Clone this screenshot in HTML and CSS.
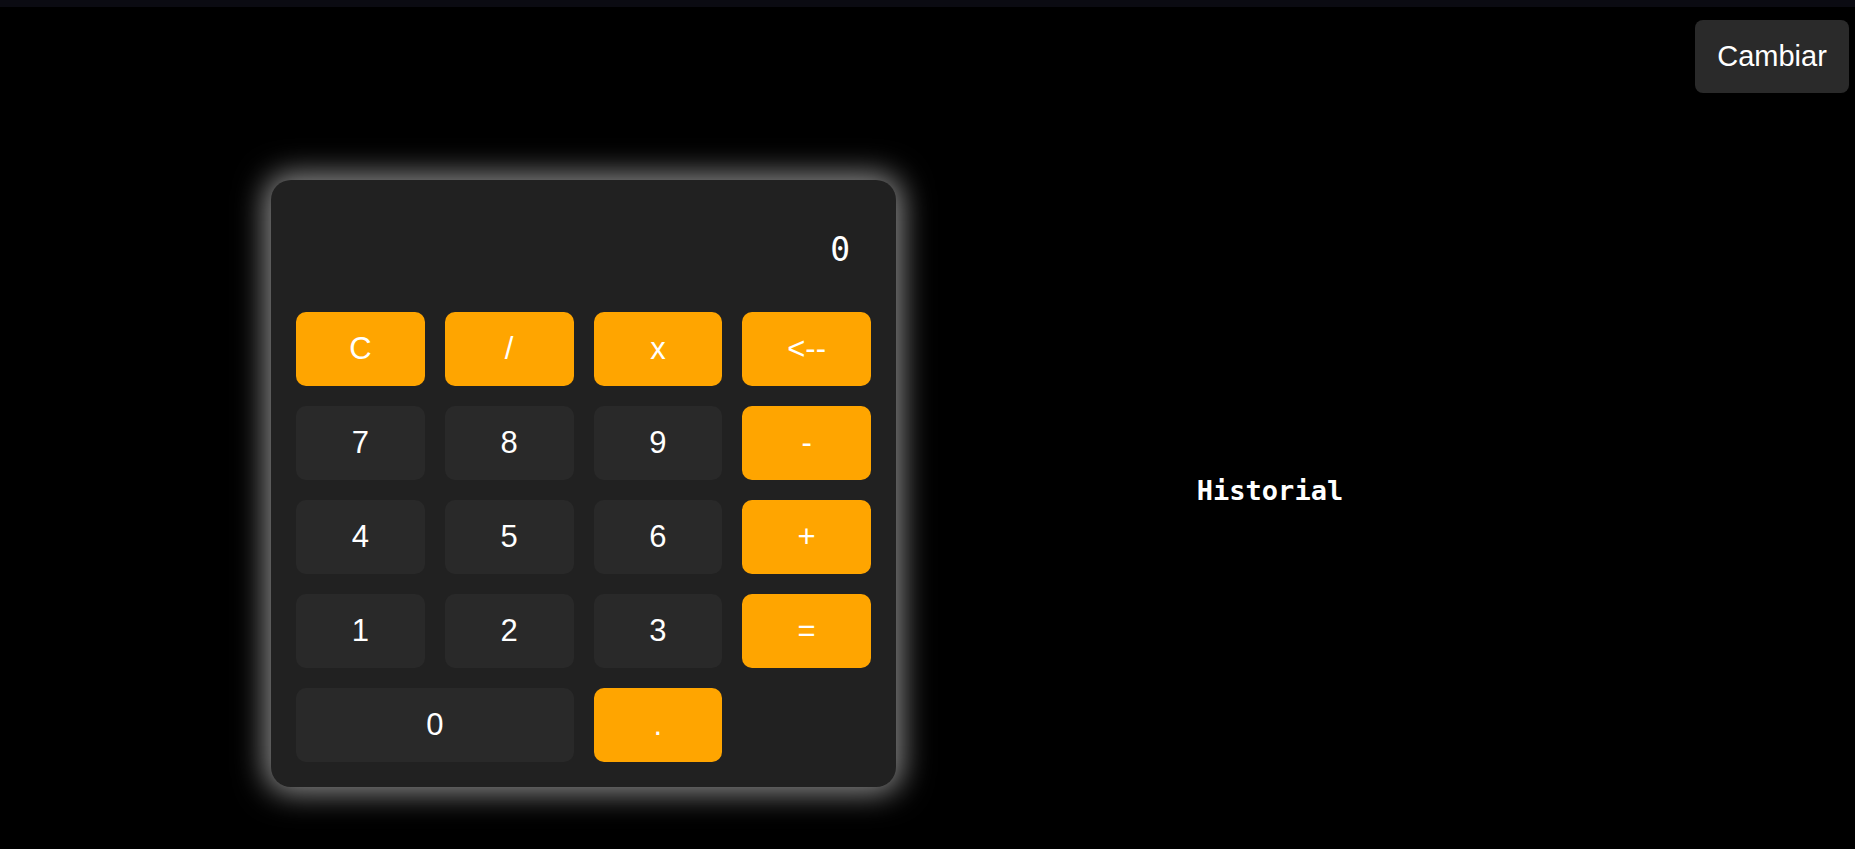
FILE: index.html
```html
<!DOCTYPE html>
<html lang="es">
<head>
<meta charset="utf-8">
<title>Calculadora</title>
<link rel="stylesheet" href="styles.css">
</head>
<body>
<div class="topbar"></div>
<header class="header">
  <button class="toggle">Cambiar</button>
</header>
<main class="main">
  <section class="calc">
    <div class="display">0</div>
    <div class="keys">
      <button class="key op">C</button>
      <button class="key op">/</button>
      <button class="key op">x</button>
      <button class="key op">&lt;--</button>
      <button class="key">7</button>
      <button class="key">8</button>
      <button class="key">9</button>
      <button class="key op">-</button>
      <button class="key">4</button>
      <button class="key">5</button>
      <button class="key">6</button>
      <button class="key op">+</button>
      <button class="key">1</button>
      <button class="key">2</button>
      <button class="key">3</button>
      <button class="key op">=</button>
      <button class="key wide">0</button>
      <button class="key op">.</button>
    </div>
  </section>
  <section class="history">
    <h2 class="history-title">Historial</h2>
  </section>
</main>
</body>
</html>
```
FILE: styles.css
```css
* { box-sizing: border-box; }
html, body { margin: 0; padding: 0; }
body {
  background: #000;
  color: #fff;
  font-family: "Liberation Sans", Arial, sans-serif;
  width: 1855px;
  height: 849px;
  overflow: hidden;
}
.topbar {
  height: 7px;
  background: #0b0b12;
}
.header {
  display: flex;
  justify-content: flex-end;
  padding: 13px 6px 0 0;
  height: 93px;
}
.toggle {
  width: 154px;
  height: 73px;
  background: #2a2a2a;
  color: #fff;
  border: none;
  border-radius: 8px;
  font-family: "Liberation Sans", Arial, sans-serif;
  font-size: 29px;
  padding: 0;
}
.main {
  display: flex;
  align-items: flex-start;
  padding: 80px 0 0 271px;
}
.calc {
  width: 625px;
  height: 607px;
  background: #212121;
  border-radius: 20px;
  padding: 25px;
  box-shadow: 0 0 30px 6px rgba(255, 255, 255, 0.55);
  display: flex;
  flex-direction: column;
}
.display {
  height: 107px;
  padding: 1px 21px 19px 0;
  display: flex;
  align-items: center;
  justify-content: flex-end;
  font-family: "DejaVu Sans Mono", "Liberation Mono", monospace;
  font-size: 33px;
  color: #fff;
}
.keys {
  display: grid;
  grid-template-columns: repeat(4, 1fr);
  grid-auto-rows: 74px;
  column-gap: 20px;
  row-gap: 20px;
}
.key {
  background: #292929;
  color: #fff;
  border: none;
  border-radius: 10px;
  font-family: "Liberation Sans", Arial, sans-serif;
  font-size: 31px;
  padding: 0;
}
.key.op { background: #ffa500; }
.key.wide { grid-column: span 2; }
.history {
  width: 500px;
  margin-left: 124px;
  height: 607px;
  display: flex;
  align-items: center;
  justify-content: center;
  padding-top: 14px;
}
.history-title {
  margin: 0;
  font-family: "DejaVu Sans Mono", "Liberation Mono", monospace;
  font-weight: bold;
  font-size: 27px;
  color: #fff;
}
```
